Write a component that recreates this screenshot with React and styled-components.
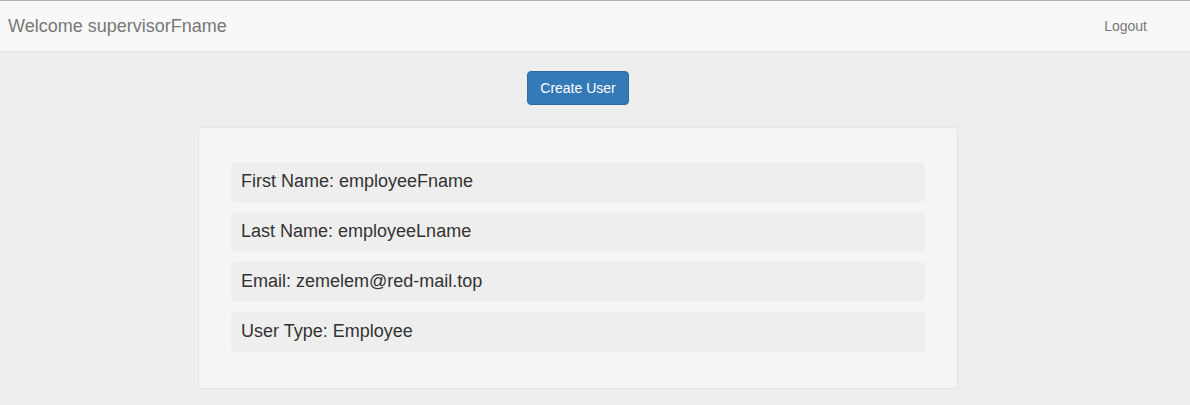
import React from "react";
import styled, { createGlobalStyle } from "styled-components";

const GlobalStyle = createGlobalStyle`
  html, body {
    margin: 0;
    padding: 0;
    background: #eeeeee;
    font-family: "Liberation Sans", Arial, sans-serif;
    font-size: 14px;
    color: #333;
  }
  * { box-sizing: border-box; }
`;

const Navbar = styled.nav`
  height: 52px;
  border-top: 1px solid #b4b4b4;
  border-bottom: 1px solid #e7e7e7;
  background: #f8f8f8;
  display: flex;
  align-items: center;
  justify-content: space-between;
  padding: 0 43px 0 8px;
`;

const Brand = styled.span`
  font-size: 18px;
  color: #777;
`;

const NavLink = styled.a`
  font-size: 14px;
  color: #777;
  text-decoration: none;
  cursor: pointer;
`;

const Main = styled.main`
  width: 760px;
  margin-left: 198px;
  display: flex;
  flex-direction: column;
  align-items: center;
  padding-top: 19px;
`;

const Button = styled.button`
  font-family: inherit;
  font-size: 14px;
  line-height: 20px;
  padding: 6px 12px;
  color: #fff;
  background: #337ab7;
  border: 1px solid #2e6da4;
  border-radius: 4px;
  cursor: pointer;
`;

const Well = styled.section`
  align-self: stretch;
  margin-top: 21px;
  padding: 35px 32px 36px;
  background: #f5f5f5;
  border: 1px solid #e3e3e3;
  border-radius: 4px;
  box-shadow: inset 0 1px 1px rgba(0, 0, 0, 0.05);
  display: flex;
  flex-direction: column;
  gap: 10px;
`;

const Field = styled.div`
  height: 40px;
  display: flex;
  align-items: center;
  padding: 0 10px 2px;
  background: #eeeeee;
  border-radius: 4px;
  font-size: 18px;
  color: #333;
`;

const fields = [
  ["First Name", "employeeFname"],
  ["Last Name", "employeeLname"],
  ["Email", "zemelem@red-mail.top"],
  ["User Type", "Employee"],
];

function App() {
  return (
    <>
      <GlobalStyle />
      <Navbar>
        <Brand>Welcome supervisorFname</Brand>
        <NavLink>Logout</NavLink>
      </Navbar>
      <Main>
        <Button>Create User</Button>
        <Well>
          {fields.map(([label, value]) => (
            <Field key={label}>
              {label}: {value}
            </Field>
          ))}
        </Well>
      </Main>
    </>
  );
}

export default App;
